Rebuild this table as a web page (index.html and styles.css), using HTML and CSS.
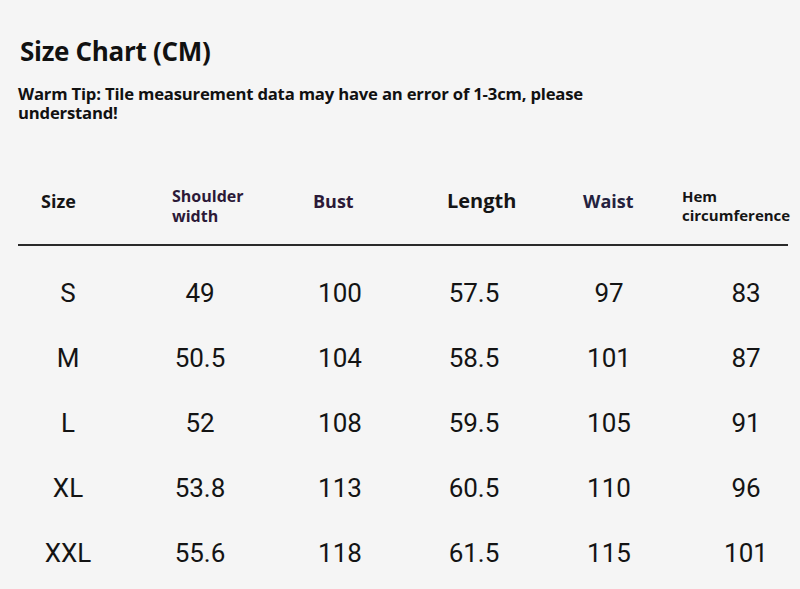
FILE: index.html
```html
<!DOCTYPE html>
<html lang="en">
<head>
<meta charset="utf-8">
<title>Size Chart (CM)</title>
<link rel="stylesheet" href="styles.css">
</head>
<body>
<main class="page">
  <h1 class="title">Size Chart (CM)</h1>
  <p class="tip">Warm Tip: Tile measurement data may have an error of 1-3cm, please understand!</p>

  <div class="chart">
    <div class="head">
      <div class="th c1">Size</div>
      <div class="th c2 purple">Shoulder<br>width</div>
      <div class="th c3 purple">Bust</div>
      <div class="th c4">Length</div>
      <div class="th c5 navy">Waist</div>
      <div class="th c6">Hem<br>circumference</div>
    </div>
    <div class="row"><div class="td c1">S</div><div class="td c2">49</div><div class="td c3">100</div><div class="td c4">57.5</div><div class="td c5">97</div><div class="td c6">83</div></div>
    <div class="row"><div class="td c1">M</div><div class="td c2">50.5</div><div class="td c3">104</div><div class="td c4">58.5</div><div class="td c5">101</div><div class="td c6">87</div></div>
    <div class="row"><div class="td c1">L</div><div class="td c2">52</div><div class="td c3">108</div><div class="td c4">59.5</div><div class="td c5">105</div><div class="td c6">91</div></div>
    <div class="row"><div class="td c1">XL</div><div class="td c2">53.8</div><div class="td c3">113</div><div class="td c4">60.5</div><div class="td c5">110</div><div class="td c6">96</div></div>
    <div class="row"><div class="td c1">XXL</div><div class="td c2">55.6</div><div class="td c3">118</div><div class="td c4">61.5</div><div class="td c5">115</div><div class="td c6">101</div></div>
  </div>
</main>
</body>
</html>
```

FILE: styles.css
```css
html, body {
  margin: 0;
  padding: 0;
  background: #f5f5f5;
}

.page {
  width: 800px;
  height: 589px;
  overflow: hidden;
  padding: 34px 0 0 18px;
  box-sizing: border-box;
  font-family: "Open Sans", "Liberation Sans", sans-serif;
  color: #111;
}

.title {
  margin: 0 0 0 2px;
  font-size: 26px;
  line-height: 34px;
  font-weight: 700;
  letter-spacing: -0.3px;
}

.tip {
  margin: 16px 0 0 0;
  width: 620px;
  font-size: 16.7px;
  line-height: 19px;
  font-weight: 700;
  letter-spacing: -0.2px;
}

.chart {
  margin-top: 50px;
  width: 770px;
}

.head,
.row {
  display: grid;
  grid-template-columns: 100px 164px 116px 152px 118px 120px;
}

.head {
  box-sizing: border-box;
  height: 74px;
  padding-bottom: 14px;
  align-items: center;
  border-bottom: 2px solid #2a2a2a;
}

.th {
  font-weight: 700;
  font-size: 18px;
  line-height: 20px;
  color: #151515;
}

.head .c1 { padding-left: 23px; }
.head .c2 { padding-left: 54px; font-size: 16px; padding-top: 10px; }
.head .c3 { padding-left: 31px; font-size: 18px; }
.head .c4 { padding-left: 49px; font-size: 20px; }
.head .c5 { padding-left: 33px; font-size: 18px; }
.head .c6 { padding-left: 14px; padding-top: 10px; font-size: 15px; line-height: 19px; }

.purple { color: #2c1a38; }
.navy { color: #24223e; }

.row {
  height: 65px;
  align-items: center;
  font-family: Roboto, "Liberation Sans", sans-serif;
  font-size: 26px;
  color: #141414;
}

.head + .row { margin-top: 14px; }

.td { text-align: center; }
.row .c6 { padding-left: 36px; }
```
